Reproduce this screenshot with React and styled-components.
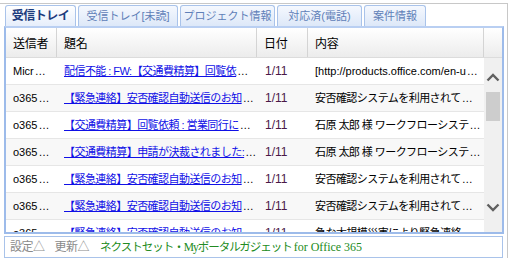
import React from "react";
import styled, { createGlobalStyle } from "styled-components";

const GlobalStyle = createGlobalStyle`
  html, body { margin: 0; padding: 0; background: #fff; }
  body { font-family: "Liberation Sans", "Noto Sans CJK JP", sans-serif; }
`;

const tabs = [
  { label: "受信トレイ", width: 71, active: true },
  { label: "受信トレイ[未読]", width: 100 },
  { label: "プロジェクト情報", width: 95 },
  { label: "対応済(電話)", width: 85 },
  { label: "案件情報", width: 62 },
];

// texts as the gadget shows them, already cut to the column width
const mails = [
  { from: "Micr", title: "配信不能 : FW:【交通費精算】回覧依", date: "1/11", body: "[http://products.office.com/en-u", latin: true },
  { from: "o365", title: "【緊急連絡】安否確認自動送信のお知", date: "1/11", body: "安否確認システムを利用されて" },
  { from: "o365", title: "【交通費精算】回覧依頼 : 営業同行に", date: "1/11", body: "石原 太郎 様 ワークフローシステ" },
  { from: "o365", title: "【交通費精算】申請が決裁されました:", date: "1/11", body: "石原 太郎 様 ワークフローシステ" },
  { from: "o365", title: "【緊急連絡】安否確認自動送信のお知", date: "1/11", body: "安否確認システムを利用されて" },
  { from: "o365", title: "【緊急連絡】安否確認自動送信のお知", date: "1/11", body: "安否確認システムを利用されて" },
  { from: "o365", title: "【緊急連絡】安否確認自動送信のお知", date: "1/11", body: "急な大規模災害により緊急連絡" },
];

const COLS = "51px 200px 51px 176px";

const App = () => {
  return (
    <Frame>
      <GlobalStyle />
      <TabBar>
        {tabs.map((t) => (
          <Tab key={t.label} $w={t.width} $active={t.active}>
            {t.label}
          </Tab>
        ))}
      </TabBar>
      <Panel>
        <HeadRow>
          <HeadCell>送信者</HeadCell>
          <HeadCell>題名</HeadCell>
          <HeadCell>日付</HeadCell>
          <HeadCell>内容</HeadCell>
          <HeadCell $last />
        </HeadRow>
        <Body>
          <Rows>
            {mails.map((m, i) => (
              <Row key={i} $alt={i % 2 === 1}>
                <Cell>
                  {m.from}
                  <Dots>…</Dots>
                </Cell>
                <Cell $jp>
                  <Link href="#">{m.title}</Link>
                  <Dots>…</Dots>
                </Cell>
                <DateCell>{m.date}</DateCell>
                <Cell $jp={!m.latin}>
                  {m.body}
                  <Dots>…</Dots>
                </Cell>
              </Row>
            ))}
          </Rows>
          <ScrollBar>
            <Arrow $up>
              <svg width="14" height="9" viewBox="0 0 14 9">
                <path d="M1.5 7.5 L7 2 L12.5 7.5" fill="none" stroke="#606060" strokeWidth="2.4" />
              </svg>
            </Arrow>
            <Thumb />
            <Track />
            <Arrow>
              <svg width="14" height="9" viewBox="0 0 14 9">
                <path d="M1.5 1.5 L7 7 L12.5 1.5" fill="none" stroke="#606060" strokeWidth="2.4" />
              </svg>
            </Arrow>
          </ScrollBar>
        </Body>
      </Panel>
      <Footer>
        <Action>設定△</Action>
        <Action>更新△</Action>
        <Brand>
          ネクストセット・Myポータルガジェット <Latin>for Office 365</Latin>
        </Brand>
      </Footer>
    </Frame>
  );
};

const Frame = styled.div`
  width: 508px;
  height: 255px;
  margin-top: 3px;
  border-top: 1px solid #c8c8c8;
  border-right: 1px solid #c8c8c8;
  box-sizing: border-box;
`;

const TabBar = styled.div`
  display: flex;
  gap: 2px;
  padding: 1px 0 0 5px;
  height: 22px;
  box-sizing: border-box;
`;

const Tab = styled.div`
  width: ${({ $w }) => $w}px;
  height: 21px;
  box-sizing: border-box;
  border: 1px solid #a9c3ea;
  border-bottom: none;
  border-radius: 3px 3px 0 0;
  background: ${({ $active }) =>
    $active
      ? "linear-gradient(#ffffff, #e6eefb)"
      : "linear-gradient(#f5f8fe, #dde8f8)"};
  color: ${({ $active }) => ($active ? "#1c3c7e" : "#5f80b8")};
  font-size: ${({ $active }) => ($active ? "12px" : "11px")};
  letter-spacing: ${({ $active }) => ($active ? "-0.5px" : "0")};
  font-weight: ${({ $active }) => ($active ? 700 : 400)};
  display: flex;
  align-items: center;
  justify-content: center;
  line-height: 1;
  white-space: nowrap;
`;

const Panel = styled.div`
  margin-left: 4px;
  width: 500px;
  height: 208px;
  box-sizing: border-box;
  border: 2px solid #9dbbea;
  border-top-color: #b9cff2;
  display: flex;
  flex-direction: column;
  overflow: hidden;
`;

const HeadRow = styled.div`
  display: grid;
  grid-template-columns: ${COLS} 18px;
  height: 30px;
  flex: none;
  background: linear-gradient(#ffffff, #ececec);
  border-bottom: 1px solid #dcdcdc;
  box-sizing: border-box;
`;

const HeadCell = styled.div`
  display: flex;
  align-items: center;
  padding-left: 7px;
  font-size: 12px;
  letter-spacing: -0.3px;
  color: #000;
  border-right: ${({ $last }) => ($last ? "none" : "1px solid #d4d4d4")};
  box-sizing: border-box;
`;

const Body = styled.div`
  flex: 1;
  display: flex;
  min-height: 0;
`;

const Rows = styled.div`
  width: 478px;
  overflow: hidden;
`;

const Row = styled.div`
  display: grid;
  grid-template-columns: ${COLS};
  height: 27px;
  box-sizing: border-box;
  border-bottom: 1px solid #e6e6e6;
  background: ${({ $alt }) => ($alt ? "#f8f8f8" : "#ffffff")};
`;

const Cell = styled.div`
  padding-left: 7px;
  font-size: 11px;
  letter-spacing: ${({ $jp }) => ($jp ? "-0.55px" : "0")};
  line-height: 26px;
  color: #000;
  white-space: nowrap;
  overflow: hidden;
`;

const Dots = styled.span`
  letter-spacing: 0;
  margin-left: 1px;
`;

const DateCell = styled(Cell)`
  padding-left: 8px;
  font-size: 12px;
  color: #4a1848;
`;

const Link = styled.a`
  color: #1010e6;
  text-decoration: underline;
`;

const ScrollBar = styled.div`
  width: 18px;
  background: #f0f0f0;
  display: flex;
  flex-direction: column;
  align-items: center;
`;

const Arrow = styled.div`
  height: 34px;
  width: 100%;
  box-sizing: border-box;
  padding: ${({ $up }) => ($up ? "4px 0 0" : "0 0 16px")};
  display: flex;
  align-items: center;
  justify-content: center;
  flex: none;
`;

const Thumb = styled.div`
  width: 14px;
  height: 29px;
  background: #cdcdcd;
  flex: none;
`;

const Track = styled.div`
  flex: 1;
`;

const Footer = styled.div`
  margin: 2px 0 0 4px;
  width: 499px;
  height: 22px;
  box-sizing: border-box;
  border: 1px solid #a9c3ea;
  background: #fff;
  display: flex;
  align-items: center;
  gap: 10px;
  padding-left: 5px;
  font-size: 12px;
  line-height: 1;
  white-space: nowrap;
`;

const Action = styled.span`
  color: #8a8a8a;
  letter-spacing: -0.5px;
`;

const Brand = styled.span`
  color: #228b22;
  margin-left: 1px;
  font-family: "Liberation Serif", "Noto Sans CJK JP", serif;
  font-size: 11.5px;
  letter-spacing: -1px;
`;

const Latin = styled.span`
  font-size: 12px;
  letter-spacing: 0;
`;

export default App;
